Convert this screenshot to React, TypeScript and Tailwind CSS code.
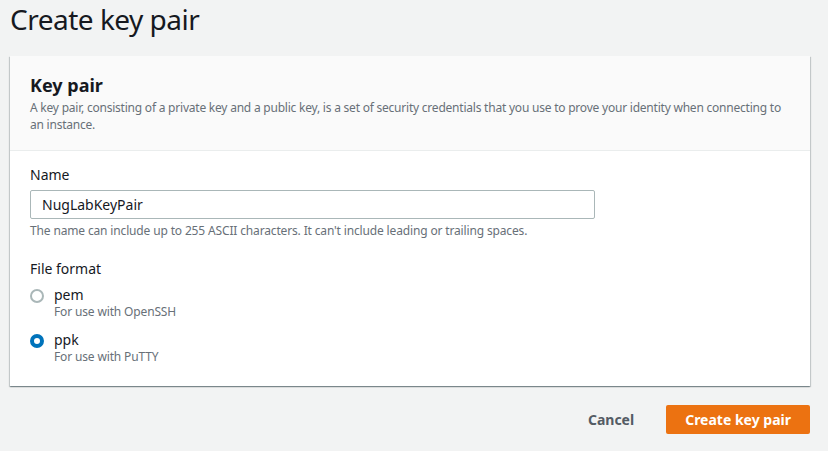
import { useState } from 'react'

const FORMATS = [
  { id: 'pem', label: 'pem', hint: 'For use with OpenSSH' },
  { id: 'ppk', label: 'ppk', hint: 'For use with PuTTY' },
]

function Radio({ checked }: { checked: boolean }) {
  return (
    <span
      aria-hidden
      className={`mt-[4px] w-[14px] h-[14px] rounded-full shrink-0 bg-white ${
        checked ? 'border-[4px] border-[#0073bb]' : 'border-2 border-[#aab7b8]'
      }`}
    />
  )
}

export default function App() {
  const [name, setName] = useState('NugLabKeyPair')
  const [format, setFormat] = useState('ppk')

  return (
    <div className="w-[828px] h-[451px] bg-[#f2f3f3] px-[10px] text-[#16191f] font-['Noto_Sans',sans-serif] overflow-hidden">
      <h1 className="pt-[1px] text-[28px] leading-[36px] font-normal tracking-[-0.5px]">Create key pair</h1>

      <div className="mt-[19px] w-[800px] bg-white shadow-[0_1px_1px_0_rgba(0,28,36,0.3),1px_1px_1px_0_rgba(0,28,36,0.15),-1px_1px_1px_0_rgba(0,28,36,0.15)]">
        <div className="bg-[#fafafa] border-b border-[#eaeded] px-[20px] pt-[16px] pb-[17px]">
          <h2 className="text-[18px] leading-[26px] font-bold">Key pair</h2>
          <p className="mt-[1px] text-[12px] leading-[17px] tracking-[-0.22px] text-[#687078]">
            A key pair, consisting of a private key and a public key, is a set of security credentials that you use to prove your identity when connecting to an instance.
          </p>
        </div>

        <div className="px-[20px] pt-[14px] pb-[21px]">
          <label className="block text-[14px] leading-[20px]">Name</label>
          <input
            value={name}
            onChange={(e) => setName(e.target.value)}
            className="mt-[5px] block w-[565px] h-[29px] px-[11px] border border-[#aab7b8] rounded-[2px] text-[14px] text-[#16191f] outline-none"
          />
          <p className="mt-[4px] text-[12px] leading-[16px] tracking-[-0.15px] text-[#687078]">
            The name can include up to 255 ASCII characters. It can't include leading or trailing spaces.
          </p>

          <div className="mt-[20px] text-[14px] leading-[20px]">File format</div>
          <div className="mt-[6px] flex flex-col gap-[10px]">
            {FORMATS.map((f) => (
              <button
                key={f.id}
                type="button"
                onClick={() => setFormat(f.id)}
                className="flex items-start gap-[10px] text-left"
              >
                <Radio checked={format === f.id} />
                <span className="flex flex-col">
                  <span className="text-[14px] leading-[19px]">{f.label}</span>
                  <span className="text-[12px] leading-[16px] tracking-[-0.15px] text-[#687078]">{f.hint}</span>
                </span>
              </button>
            ))}
          </div>
        </div>
      </div>

      <div className="mt-[19px] w-[800px] flex items-center justify-end gap-[12px]">
        <button type="button" className="h-[29px] px-[20px] text-[14px] font-bold text-[#545b64]">
          Cancel
        </button>
        <button
          type="button"
          className="h-[29px] px-[19px] rounded-[2px] bg-[#ec7211] text-[14px] font-bold text-white"
        >
          Create key pair
        </button>
      </div>
    </div>
  )
}
